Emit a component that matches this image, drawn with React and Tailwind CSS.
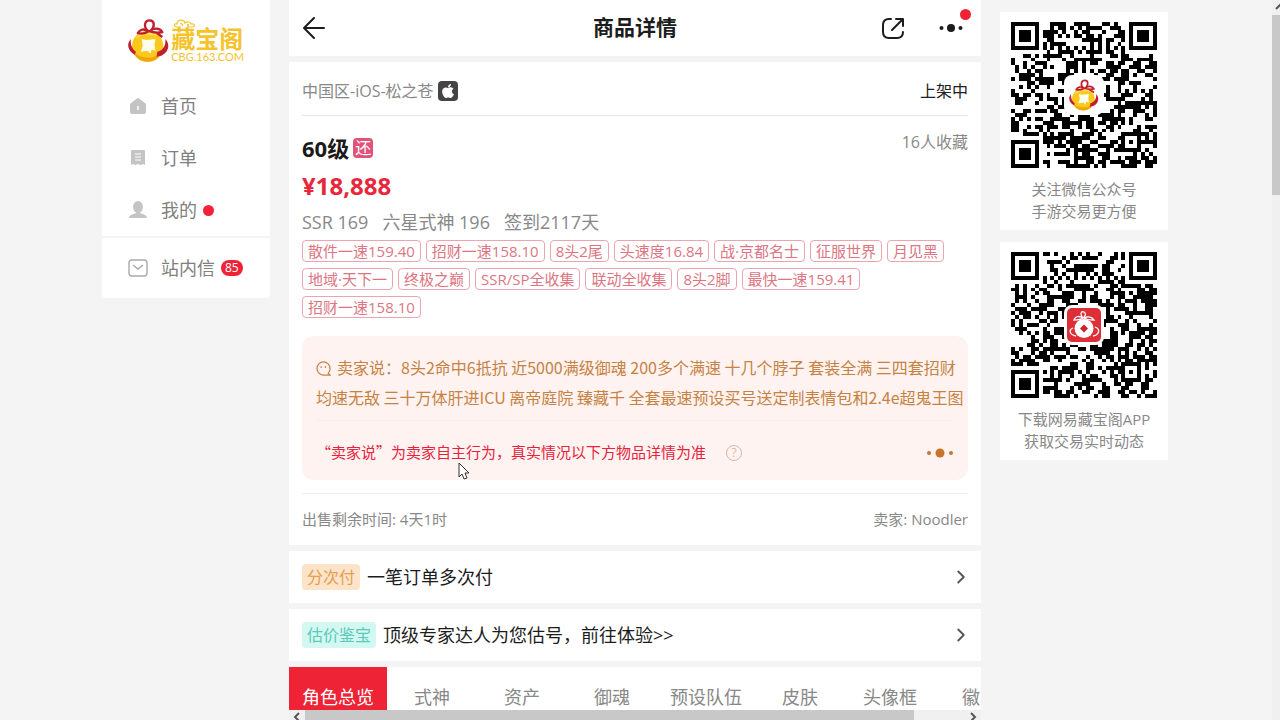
// src/App.jsx

import React from "react";
import { FaApple } from "react-icons/fa";
import { ChevronRight } from "lucide-react";

const tags = [
  "散件一速159.40",
  "招财一速158.10",
  "8头2尾",
  "头速度16.84",
  "战·京都名士",
  "征服世界",
  "月见黑",
  "地域·天下一",
  "终极之巅",
  "SSR/SP全收集",
  "联动全收集",
  "8头2脚",
  "最快一速159.41",
  "招财一速158.10",
];

const tabs = ["角色总览", "式神", "资产", "御魂", "预设队伍", "皮肤", "头像框", "徽章"];

const QR_SIZE = 37;

function buildQr(seed) {
  let state = seed;
  const next = () => {
    state ^= state << 13;
    state ^= state >>> 17;
    state ^= state << 5;
    return (state >>> 0) / 4294967296;
  };
  const ring = (x, y, cx, cy) => Math.max(Math.abs(x - cx), Math.abs(y - cy));
  let path = "";
  for (let y = 0; y < QR_SIZE; y++) {
    for (let x = 0; x < QR_SIZE; x++) {
      let on = next() < 0.52;
      if (x === 6 || y === 6) on = (x + y) % 2 === 0;
      const align = ring(x, y, 30, 30);
      if (align <= 2) on = align !== 1;
      [
        [3, 3],
        [33, 3],
        [3, 33],
      ].forEach(([cx, cy]) => {
        const d = ring(x, y, cx, cy);
        if (d <= 4) on = d !== 4 && d !== 2;
      });
      if (on) path += `M${x} ${y}h1v1h-1z`;
    }
  }
  return path;
}

const wechatQr = buildQr(90210);
const appQr = buildQr(48151623);

function Coin(props) {
  return (
    <svg viewBox="0 0 42 45" fill="none" aria-hidden="true" {...props}>
      <circle cx="20" cy="28.500" r="16" fill="#fbc81c" />
      <path d="M4.500 32a16 16 0 0 0 31 0c-4 6-9 8-15 8s-12-2-16-8z" fill="#f0a30d" />
      <path d="M8 21c4-8 16-11 23-3-8-2-17-2-23 3z" fill="#ffe45c" />
      <path d="M3 21C-2 26 0 33 7 37l1-3c-4-3-6-8-5-13zM38 21c5 5 4 13-4 17l-5 1 1-5c5-1 9-6 8-13z" fill="#c01f30" />
      <path
        d="M21 13C15 9 17 2 22 2s6 6 1 11M21 13c-5-3-9-2-11 2 4 1 8 0 11-2zM22 13c5-4 11-3 13 1-5 1-8 1-13-1zM28 14l7 5"
        stroke="#c01f30"
        strokeWidth="2.400"
        strokeLinejoin="round"
      />
      <path d="m14 21 5 1 9-1-1 6 1 6-4-1-1 4-3-3-7 1 2-6z" fill="#fffdf0" />
    </svg>
  );
}

function RedCoin() {
  return (
    <svg viewBox="0 0 34 34" className="size-[34px]" aria-hidden="true">
      <rect width="34" height="34" rx="5" fill="#de2f38" />
      <path d="M6 20c-5 2-3 7 3 8M28 19c6 2 4 8-2 9" fill="none" stroke="#fff" strokeWidth="1.300" />
      <circle cx="17" cy="20.500" r="9.500" fill="#fff" />
      <path d="m17 16.500 4 4-4 4-4-4z" fill="#c9232e" />
      <path
        d="M16 10c-5-3-8-1-9 2 4 0 7 0 9-2zm0 0c-4-5-1-7 1-6s2 4-1 6zm1 0c4-2 8-1 10 2-4 0-7 0-10-2z"
        fill="#de2f38"
        stroke="#fff"
        strokeWidth="1.300"
      />
    </svg>
  );
}

function Logo() {
  return (
    <a href="#home" className="flex items-end gap-0.5">
      <Coin className="h-[45px] w-[42px]" />
      <span className="relative flex flex-col text-[#f5c32c]">
        <svg viewBox="0 0 24 10" className="absolute -top-2 left-0.5 h-2.5 w-6" fill="none" stroke="currentColor" aria-hidden="true">
          <path d="M8 8H4C0 8 1 4 4 5c0-5 7-5 8-1 2-2 6-1 6 1 4-1 5 3 1 3h-5M7 5c2-1 3 1 2 2M14 5c2 0 2 2 0 2" strokeWidth="1.200" />
        </svg>
        <span className="text-2xl leading-6 font-bold">藏宝阁</span>
        <span className="font-[Lato] text-[11px] leading-3">CBG.163.COM</span>
      </span>
    </a>
  );
}

function HomeIcon() {
  return (
    <svg viewBox="0 0 18 18" className="size-[18px]" aria-hidden="true">
      <path d="M8 1.500q1-.8 2 0l6 4.500q1 .7 1 2v7q0 2-2 2H3q-2 0-2-2V8q0-1.300 1-2z" fill="#c4c4c4" />
      <path d="M9 9v4" stroke="#fff" strokeWidth="1.500" />
    </svg>
  );
}

function OrderIcon() {
  return (
    <svg viewBox="0 0 18 18" className="size-[18px]" aria-hidden="true">
      <path d="M3 1h12q1 0 1 1v14l-2-1-2 1-3-1-3 1-2-1-2 1V2q0-1 1-1z" fill="#c4c4c4" />
      <path d="M6 5h6M6 8h6M6 11h6" stroke="#fff" />
    </svg>
  );
}

function UserIcon() {
  return (
    <svg viewBox="0 0 18 18" className="size-[18px]" fill="#c4c4c4" aria-hidden="true">
      <ellipse cx="9" cy="6" rx="5" ry="6" />
      <path d="M7 10h4v2c1 1 7 1 7 5H0c0-4 6-4 7-5z" />
    </svg>
  );
}

function MailIcon() {
  return (
    <svg viewBox="0 0 20 18" className="h-[18px] w-5" fill="none" stroke="#aaa" strokeWidth="1.400" aria-hidden="true">
      <rect x="1" y="1" width="18" height="16" rx="3" />
      <path d="m5 6 5 4 5-4" />
    </svg>
  );
}

function NavItem({ icon, label, children }) {
  return (
    <a href="#nav" className="flex h-[52px] items-center text-lg text-[#808080]">
      <span className="flex w-5 justify-center">{icon}</span>
      <span className="ml-[13px]">{label}</span>
      {children}
    </a>
  );
}

function Sidebar() {
  return (
    <nav className="w-[168px] shrink-0">
      <div className="bg-white px-[26px] pt-[18px]">
        <Logo />
        <div className="mt-[17px]">
          <NavItem icon={<HomeIcon />} label="首页" />
          <NavItem icon={<OrderIcon />} label="订单" />
          <NavItem icon={<UserIcon />} label="我的">
            <span className="ml-1.5 size-[11px] rounded-full bg-[#f5203a]" />
          </NavItem>
        </div>
      </div>
      <div className="mt-0.5 rounded-b bg-white px-[26px] pt-1 pb-1">
        <NavItem icon={<MailIcon />} label="站内信">
          <span className="ml-1.5 rounded-full bg-[#ee2336] px-1 text-xs leading-4 text-white">85</span>
        </NavItem>
      </div>
    </nav>
  );
}

function Header() {
  return (
    <header className="flex h-14 shrink-0 items-center justify-between bg-white px-3.5">
      <button type="button" aria-label="返回" className="flex w-24">
        <svg viewBox="0 0 22 22" className="size-[22px]" fill="none" stroke="#1c1c1c" strokeWidth="2" strokeLinecap="round" strokeLinejoin="round">
          <path d="M11 1 1 11l10 10M1 11h20" />
        </svg>
      </button>
      <h1 className="text-[21px] font-bold text-[#1c1c1c]">商品详情</h1>
      <div className="flex w-24 items-center justify-end gap-[34px] pr-1">
        <button type="button" aria-label="分享">
          <svg viewBox="0 0 24 22" className="h-[22px] w-6" fill="none" stroke="#1c1c1c" strokeWidth="2" strokeLinecap="round" strokeLinejoin="round">
            <path d="M10 2H8Q2 2 2 8v7q0 6 6 6h8q6 0 6-6M15 2h7v7M22 2 11 13" />
          </svg>
        </button>
        <button type="button" aria-label="更多" className="relative">
          <svg viewBox="0 0 24 10" className="h-2.5 w-6" fill="#1c1c1c">
            <circle cx="2.500" cy="5" r="2" />
            <circle cx="12" cy="5" r="4" />
            <circle cx="21.500" cy="5" r="2" />
          </svg>
          <span className="absolute -top-3.5 -right-2 size-[11px] rounded-full bg-[#ee2336]" />
        </button>
      </div>
    </header>
  );
}

function SellerNote() {
  return (
    <div className="mt-[18px] rounded-xl bg-[#fff3f1] px-3.5 pt-4">
      <p className="-mr-2.5 font-['Noto_Sans_CJK_SC',sans-serif] text-base leading-[30px] text-[#c68243]">
        <svg viewBox="0 0 16 16" className="mr-1.5 inline size-[15px] align-[-2px]" fill="none" stroke="currentColor" strokeWidth="1.300" aria-hidden="true">
          <path d="M15 15H8a7 7 0 1 1 7-7q0 3-2 5z" />
          <path d="M5.500 5.500v2M10 5.500v2" />
        </svg>
        卖家说：8头2命中6抵抗 近5000满级御魂 200多个满速 十几个脖子 套装全满 三四套招财
        <br />
        均速无敌 三十万体肝进ICU 离帝庭院 臻藏千 全套最速预设买号送定制表情包和2.4e超鬼王图
      </p>
      <div className="mt-2 flex h-[60px] items-center border-t border-[#fcedea] pt-1">
        <p className="font-['Noto_Sans_CJK_SC',sans-serif] text-[15px] text-[#e5233c]">
          “卖家说”为卖家自主行为，真实情况以下方物品详情为准
        </p>
        <button type="button" aria-label="说明" className="ml-5 flex size-4 items-center justify-center rounded-full border border-[#d9b8a4] text-xs text-[#d9b8a4]">
          ?
        </button>
        <button type="button" aria-label="展开" className="mr-px ml-auto">
          <svg viewBox="0 0 26 10" className="h-2.5 w-[26px]" fill="#c8742a">
            <circle cx="2" cy="5" r="2" />
            <circle cx="13" cy="5" r="4.500" />
            <circle cx="24" cy="5" r="2" />
          </svg>
        </button>
      </div>
    </div>
  );
}

function Product() {
  return (
    <section className="mt-1.5 shrink-0 bg-white px-[13px]">
      <div className="flex h-[54px] items-center justify-between border-b border-[#e6e6e6] pt-1">
        <span className="flex items-center gap-1 text-base text-[#888]">
          中国区-iOS-松之苍
          <span className="flex size-5 items-center justify-center rounded bg-[#444] text-white">
            <FaApple className="size-4" />
          </span>
        </span>
        <span className="text-base text-[#222]">上架中</span>
      </div>
      <div className="mt-[18px] flex items-start justify-between">
        <h2 className="flex h-7 items-center gap-1 text-[22px] font-bold text-[#1a1a1a]">
          60级
          <span className="flex size-5 items-center justify-center rounded bg-[#e0527a] text-base font-normal text-white">还</span>
        </h2>
        <span className="text-base leading-4 text-[#888]">16人收藏</span>
      </div>
      <p className="text-2xl leading-[48px] font-bold text-[#e8273c]">¥18,888</p>
      <p className="flex gap-3.5 text-lg leading-6 text-[#888]">
        <span>SSR 169</span>
        <span>六星式神 196</span>
        <span>签到2117天</span>
      </p>
      <ul className="mt-1.5 flex flex-wrap gap-x-[5px] gap-y-1.5">
        {tags.map((tag, i) => (
          <li key={i} className="rounded border border-[#eba5ae] px-[5px] text-[15px] leading-5 text-[#dd7582]">
            {tag}
          </li>
        ))}
      </ul>
      <SellerNote />
      <div className="mt-[13px] flex h-[52px] items-center justify-between border-t border-[#eee] text-[15px] text-[#888]">
        <span>出售剩余时间: 4天1时</span>
        <span>卖家: Noodler</span>
      </div>
    </section>
  );
}

function LinkRow({ badge, badgeClass, children }) {
  return (
    <a href="#more" className="mt-1.5 flex h-[52px] shrink-0 items-center bg-white px-[13px]">
      <span className={`rounded px-[5px] text-base leading-[26px] ${badgeClass}`}>{badge}</span>
      <span className="ml-[7px] text-lg text-[#1c1c1c]">{children}</span>
      <ChevronRight className="-mr-1 ml-auto size-[22px] text-[#555]" />
    </a>
  );
}

function Tabs() {
  return (
    <div role="tablist" className="mt-1.5 flex shrink-0 overflow-hidden bg-white">
      {tabs.map((tab, i) => (
        <button
          key={tab}
          type="button"
          role="tab"
          aria-selected={i === 0}
          className={`h-[60px] min-w-[90px] shrink-0 px-[13px] text-lg ${i === 0 ? "bg-[#ee2336] text-white" : "text-[#888]"}`}
        >
          {tab}
        </button>
      ))}
    </div>
  );
}

function QrCard({ path, lines, children }) {
  return (
    <div className="flex flex-col items-center bg-white pt-2.5 pb-2">
      <div className="relative">
        <svg viewBox="0 0 37 37" className="size-[146px]" shapeRendering="crispEdges" aria-hidden="true">
          <path d={path} fill="#000" />
        </svg>
        <div className="absolute inset-0 flex items-center justify-center">
          <div className="flex size-10 items-center justify-center rounded-lg bg-white">{children}</div>
        </div>
      </div>
      <p className="mt-2.5 text-center text-[15px] leading-[22px] text-[#888]">
        {lines[0]}
        <br />
        {lines[1]}
      </p>
    </div>
  );
}

export default function App() {
  return (
    <div
      lang="zh-CN"
      className="flex h-screen overflow-hidden bg-[#f4f4f4] font-['Open_Sans','Noto_Sans_CJK_SC',sans-serif]"
    >
      <div className="flex min-w-0 flex-1 justify-center pr-0.5">
        <div className="flex w-full max-w-[1066px] gap-[19px]">
          <Sidebar />
          <main className="flex min-w-0 flex-1 flex-col">
            <div className="flex min-h-0 flex-1 flex-col overflow-hidden">
              <Header />
              <Product />
              <LinkRow badge="分次付" badgeClass="bg-[#fde3c8] text-[#e3a052]">
                一笔订单多次付
              </LinkRow>
              <LinkRow badge="估价鉴宝" badgeClass="bg-[#d3f8f1] text-[#5cc9bb]">
                {"顶级专家达人为您估号，前往体验>>"}
              </LinkRow>
              <Tabs />
            </div>
            <div className="flex h-2.5 shrink-0 items-start overflow-hidden bg-[#f0f0f0]">
              <svg viewBox="0 0 16 16" className="size-4 shrink-0" fill="none" stroke="#555" strokeWidth="2" aria-hidden="true">
                <path d="m10 3-4 4 4 4" />
              </svg>
              <div className="h-full w-[88%] bg-[#c8c8c8]" />
              <svg viewBox="0 0 16 16" className="ml-auto size-4 shrink-0" fill="none" stroke="#555" strokeWidth="2" aria-hidden="true">
                <path d="m6 3 4 4-4 4" />
              </svg>
            </div>
          </main>
          <aside className="flex w-[168px] shrink-0 flex-col gap-3 pt-3">
            <QrCard path={wechatQr} lines={["关注微信公众号", "手游交易更方便"]}>
              <Coin className="h-8 w-[30px]" />
            </QrCard>
            <QrCard path={appQr} lines={["下载网易藏宝阁APP", "获取交易实时动态"]}>
              <RedCoin />
            </QrCard>
          </aside>
        </div>
      </div>

      <div className="flex w-2 shrink-0 flex-col overflow-hidden bg-[#f0f0f0]">
        <svg viewBox="0 0 16 15" className="h-[15px] w-4 shrink-0" fill="none" stroke="#555" strokeWidth="2" aria-hidden="true">
          <path d="m4 9 4-4 4 4" />
        </svg>
        <div className="h-1/4 bg-[#c8c8c8]" />
      </div>

      {/* mouse pointer */}
      <svg viewBox="0 0 12 18" className="absolute top-[462px] left-[458px] h-[18px] w-3" aria-hidden="true">
        <path d="M1 1v14l3-3 2 5 3-1-2-5h4z" fill="#fff" stroke="#333" />
      </svg>
    </div>
  );
}
